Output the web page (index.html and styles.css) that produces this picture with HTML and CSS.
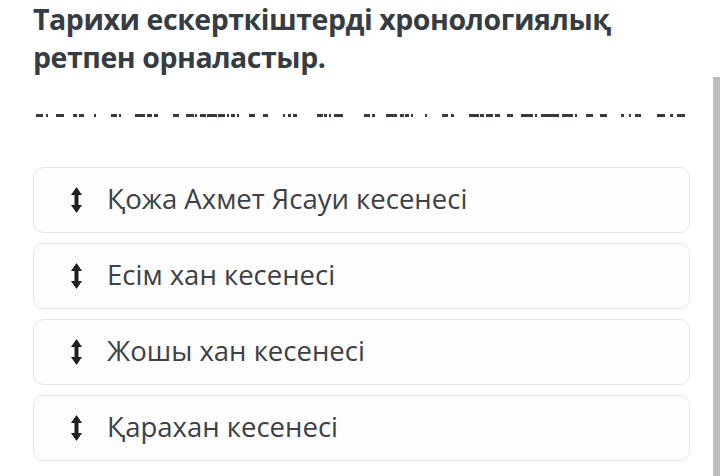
FILE: index.html
```html
<!DOCTYPE html>
<html lang="kk">
<head>
<meta charset="utf-8">
<title>Тарихи ескерткіштер</title>
<link rel="stylesheet" href="styles.css">
</head>
<body>
<div class="page">
  <h1 class="title">Тарихи ескерткіштерді хронологиялық ретпен орналастыр.</h1>
  <div class="rule">
    <svg width="660" height="3" viewBox="33 0 660 3" aria-hidden="true">
      <g fill="#363b40">
        <rect x="36" y="0" width="7" height="3"/><rect x="46" y="0" width="2" height="3"/><rect x="56" y="0" width="8" height="3"/>
        <rect x="73" y="0" width="4" height="3"/><rect x="79" y="0" width="5" height="3"/><rect x="94" y="0" width="2" height="3"/>
        <rect x="111" y="0" width="6" height="3"/><rect x="119" y="0" width="2" height="3"/><rect x="135" y="0" width="10" height="3"/>
        <rect x="147" y="0" width="5" height="3"/><rect x="154" y="0" width="4" height="3"/><rect x="173" y="0" width="6" height="3"/>
        <rect x="186" y="0" width="8" height="3"/><rect x="195" y="0" width="2" height="3"/><rect x="200" y="0" width="6" height="3"/>
        <rect x="207" y="0" width="10" height="3"/><rect x="218" y="0" width="7" height="3"/><rect x="227" y="0" width="2" height="3"/>
        <rect x="231" y="0" width="4" height="3"/><rect x="237" y="0" width="2" height="3"/><rect x="249" y="0" width="6" height="3"/>
        <rect x="263" y="0" width="5" height="3"/><rect x="283" y="0" width="2" height="3"/><rect x="288" y="0" width="3" height="3"/>
        <rect x="293" y="0" width="4" height="3"/><rect x="317" y="0" width="6" height="3"/><rect x="324" y="0" width="3" height="3"/>
        <rect x="329" y="0" width="2" height="3"/><rect x="334" y="0" width="9" height="3"/><rect x="364" y="0" width="6" height="3"/>
        <rect x="372" y="0" width="3" height="3"/><rect x="386" y="0" width="11" height="3"/><rect x="400" y="0" width="4" height="3"/>
        <rect x="405" y="0" width="4" height="3"/><rect x="411" y="0" width="2" height="3"/><rect x="425" y="0" width="2" height="3"/>
        <rect x="442" y="0" width="6" height="3"/><rect x="451" y="0" width="3" height="3"/><rect x="469" y="0" width="10" height="3"/>
        <rect x="480" y="0" width="4" height="3"/><rect x="486" y="0" width="7" height="3"/><rect x="495" y="0" width="5" height="3"/>
        <rect x="507" y="0" width="6" height="3"/><rect x="521" y="0" width="12" height="3"/><rect x="535" y="0" width="2" height="3"/>
        <rect x="541" y="0" width="18" height="3"/><rect x="562" y="0" width="11" height="3"/><rect x="575" y="0" width="2" height="3"/>
        <rect x="586" y="0" width="7" height="3"/><rect x="600" y="0" width="7" height="3"/><rect x="621" y="0" width="3" height="3"/>
        <rect x="629" y="0" width="2" height="3"/><rect x="635" y="0" width="6" height="3"/><rect x="657" y="0" width="8" height="3"/>
        <rect x="670" y="0" width="3" height="3"/><rect x="677" y="0" width="8" height="3"/>
      </g>
    </svg>
  </div>
  <ul class="items">
    <li class="item"><svg class="drag" width="11" height="26" viewBox="0 0 11 26" aria-hidden="true"><path d="M5.5 5V21" stroke="#1f1f1f" stroke-width="4"/><path d="M0 8L5.5 0L11 8Z M0 18L5.5 26L11 18Z" fill="#1f1f1f"/></svg><span class="label">Қожа Ахмет Ясауи кесенесі</span></li>
    <li class="item"><svg class="drag" width="11" height="26" viewBox="0 0 11 26" aria-hidden="true"><path d="M5.5 5V21" stroke="#1f1f1f" stroke-width="4"/><path d="M0 8L5.5 0L11 8Z M0 18L5.5 26L11 18Z" fill="#1f1f1f"/></svg><span class="label">Есім хан кесенесі</span></li>
    <li class="item"><svg class="drag" width="11" height="26" viewBox="0 0 11 26" aria-hidden="true"><path d="M5.5 5V21" stroke="#1f1f1f" stroke-width="4"/><path d="M0 8L5.5 0L11 8Z M0 18L5.5 26L11 18Z" fill="#1f1f1f"/></svg><span class="label">Жошы хан кесенесі</span></li>
    <li class="item"><svg class="drag" width="11" height="26" viewBox="0 0 11 26" aria-hidden="true"><path d="M5.5 5V21" stroke="#1f1f1f" stroke-width="4"/><path d="M0 8L5.5 0L11 8Z M0 18L5.5 26L11 18Z" fill="#1f1f1f"/></svg><span class="label">Қарахан кесенесі</span></li>
  </ul>
</div>
<div class="scrollbar"></div>
</body>
</html>
```
FILE: styles.css
```css
html, body {
  margin: 0;
  padding: 0;
  background: #ffffff;
  height: 100%;
  overflow: hidden;
}
body {
  font-family: "Open Sans", "Noto Sans", sans-serif;
  position: relative;
}
.page {
  padding: 0 30px 0 33px;
}
.title {
  margin: 0;
  font-size: 28.5px;
  line-height: 38px;
  font-weight: 700;
  letter-spacing: -0.45px;
  color: #353c42;
  width: 640px;
}
.rule {
  margin-top: 38px;
  height: 3px;
  line-height: 0;
}
.rule svg {
  display: block;
}
.items {
  list-style: none;
  margin: 50px 0 0 0;
  padding: 0;
  display: flex;
  flex-direction: column;
  gap: 10px;
  width: 657px;
}
.item {
  box-sizing: border-box;
  height: 66px;
  border: 1px solid #e4e7e9;
  border-radius: 10px;
  background: #fdfdfd;
  display: flex;
  align-items: center;
  padding-left: 37px;
  gap: 25px;
}
.drag {
  flex: none;
  display: block;
}
.label {
  font-size: 27.5px;
  line-height: 32px;
  color: #3c4145;
  margin-top: -3px;
}
.scrollbar {
  position: absolute;
  right: 0;
  top: 77px;
  bottom: 0;
  width: 7px;
  background: #bcbcbc;
}
```
